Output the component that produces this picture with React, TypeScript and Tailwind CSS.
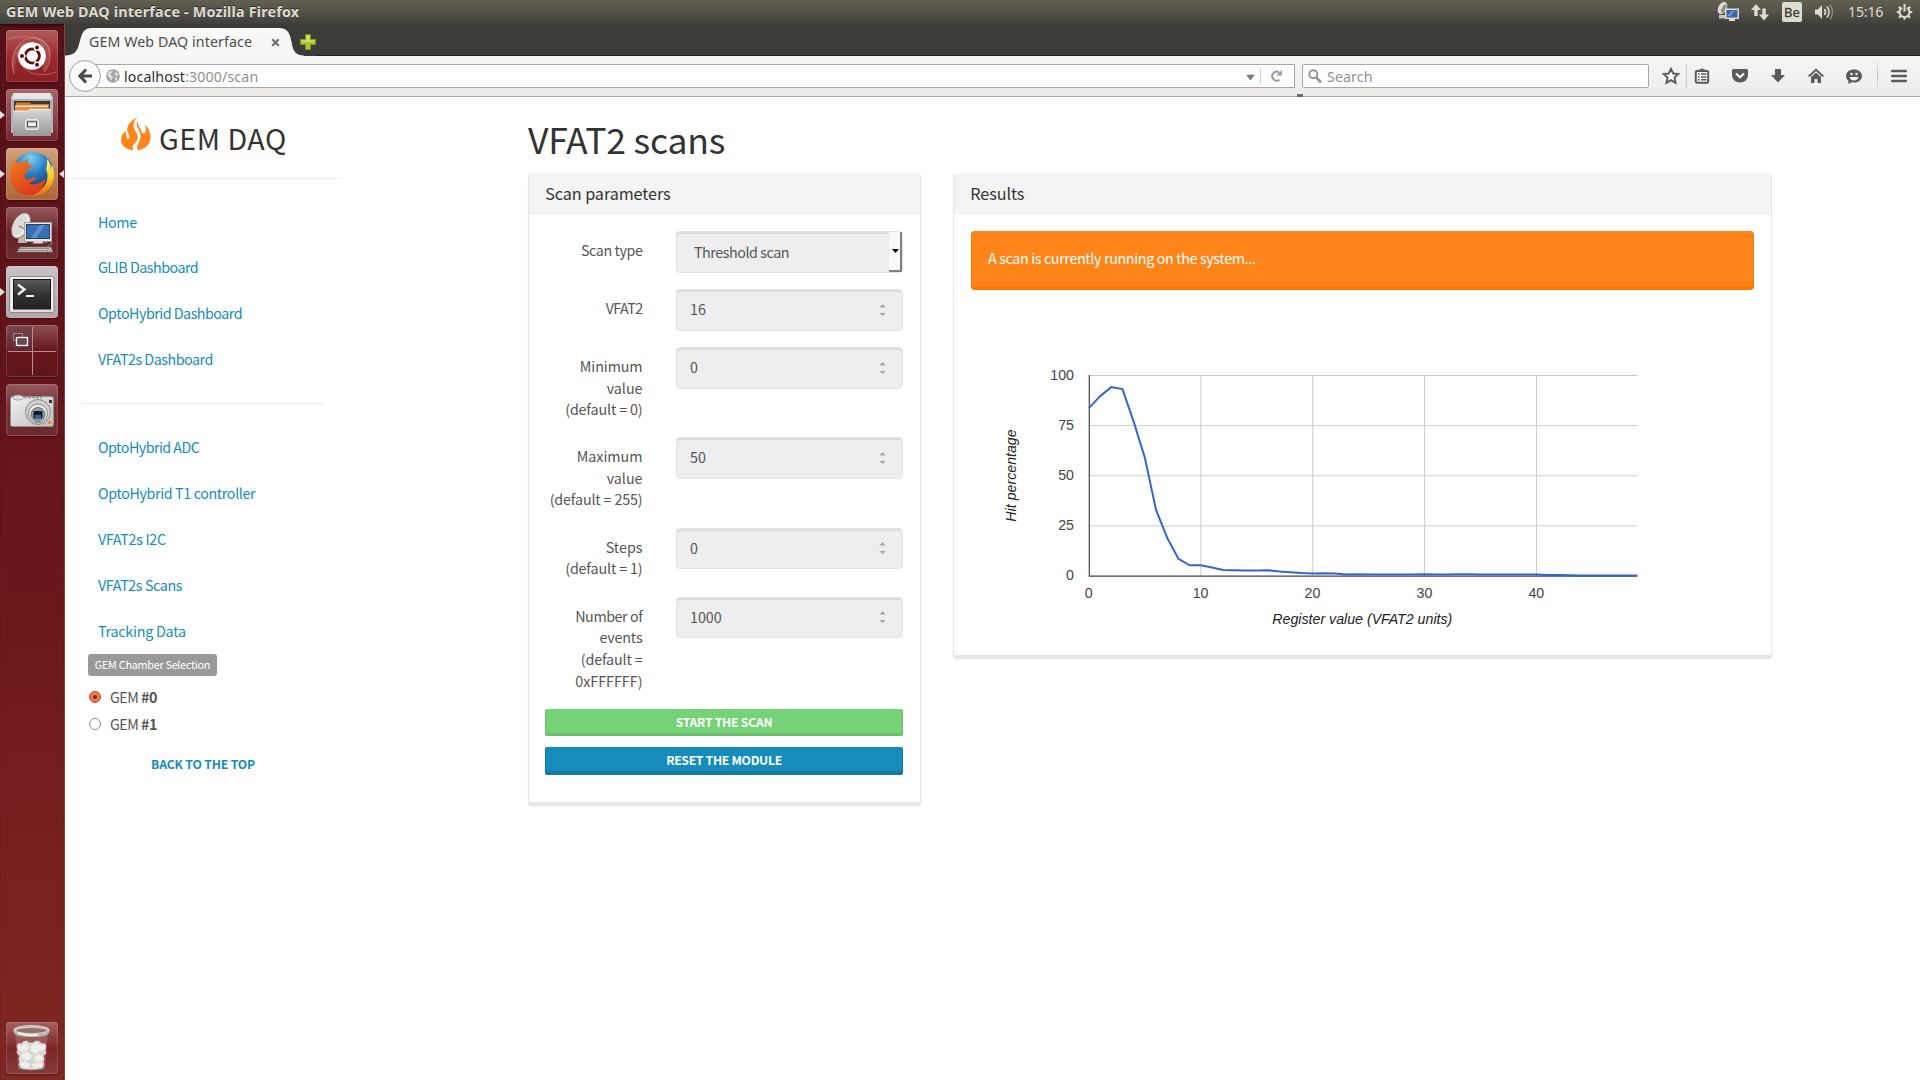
import React from "react";

const SOURCE = "font-['Noto_Sans_CJK_SC',sans-serif]";
const UI = "font-['Noto_Sans','Open_Sans',sans-serif]";

/* ---------- top system bar ---------- */

function RemoteTrayIcon() {
  return (
    <svg width="24" height="22" viewBox="0 0 24 22">
      <ellipse cx="6.5" cy="7" rx="4.2" ry="6.6" transform="rotate(28 6.5 7)" fill="#dfdbd2" />
      <ellipse cx="7.8" cy="7.6" rx="2" ry="4.6" transform="rotate(28 7.8 7.6)" fill="#8d8b84" />
      <path d="M3 14h7v3.5H3z" fill="#c9c5bc" />
      <rect x="9" y="7.5" width="14" height="10.5" fill="#dfdbd2" />
      <rect x="10.5" y="9" width="11" height="7.5" fill="#3465a4" />
      <path d="M11 15l5-5.5h3l-5 6z" fill="#6d95c9" />
      <path d="M13 18h6v2h-6z" fill="#dfdbd2" />
    </svg>
  );
}

function TopBar() {
  return (
    <header className={`flex h-6 shrink-0 items-center justify-between bg-linear-to-b from-[#615f50] via-[#54524a] to-[#403f3a] pl-[6px] pr-[7px] ${UI} text-[#dfdbd2]`}>
      <div className="text-[14.4px] font-bold leading-[22px] tracking-[0.15px] text-[#dfdbd2] [text-shadow:0_-1px_0_#2c2b27]">
        GEM Web DAQ interface - Mozilla Firefox
      </div>
      <div className="flex items-center">
        <RemoteTrayIcon />
        <svg className="ml-[11px]" width="18" height="18" viewBox="0 0 18 18" fill="#dfdbd2">
          <path d="M5 1l5 6H6.7v6H3.3V7H0z" />
          <path d="M13 17.5l-5-6h3.3V5.5h3.4v6H18z" />
        </svg>
        <div className="ml-[13px] flex h-5 w-5 items-center justify-center rounded-[2px] bg-[#dfdbd2] text-[13px] leading-5 text-[#3c3b37] [-webkit-text-stroke:0.3px]">
          Be
        </div>
        <svg className="ml-[12px]" width="21" height="18" viewBox="0 0 21 18" fill="none">
          <path d="M1 6.5h3L8 2v14l-4-4.5H1z" fill="#dfdbd2" />
          <path d="M10.5 6q2 3 0 6" stroke="#dfdbd2" strokeWidth="1.6" />
          <path d="M13 3.5q4 5.5 0 11" stroke="#dfdbd2" strokeWidth="1.6" />
          <path d="M16 1.5q5 7.5 0 15" stroke="#8a877f" strokeWidth="1.6" />
        </svg>
        <span className="ml-[13px] w-[36px] whitespace-nowrap text-[14.2px] leading-6 tracking-[-0.2px]">15:16</span>
        <svg className="ml-[12px]" width="17" height="18" viewBox="0 0 17 18" fill="none" stroke="#dfdbd2">
          <path d="M6 4.8a5 5 0 1 0 5 0" strokeWidth="2" />
          <path d="M8.5 1v7.5" strokeWidth="2" />
          <path d="M3.5 9H.8M13.5 9h2.7M5 12.7l-2 2M12 12.7l2 2M8.500 14v2.8M4.5 5.5l-1.7-1.7M12.5 5.5l1.7-1.7" strokeWidth="2" />
        </svg>
      </div>
    </header>
  );
}

/* ---------- launcher ---------- */

function UbuntuIcon() {
  return (
    <svg width="52" height="52" viewBox="0 0 52 52" fill="none">
      <g stroke="#e8b5b5" strokeOpacity=".4" strokeWidth="1">
        <path d="M2 9C20 4 44 6 44 24" />
        <path d="M8 44C2 24 14 6 30 8c16 3 18 24 8 34" />
        <path d="M50 42C28 50 10 38 12 22" />
      </g>
      <path d="M30 8c16 3 18 24 8 34C34 40 42 20 30 8Z" fill="#fff" fillOpacity=".13" />
      <path d="M8 44C2 30 8 12 20 12c-8 6-10 22-12 32Z" fill="#fff" fillOpacity=".12" />
      <circle cx="26" cy="26" r="13.8" fill="#fff" />
      <circle cx="26.3" cy="26" r="7" stroke="#5c1014" strokeWidth="3" />
      <g stroke="#fff" strokeWidth="1.4">
        <path d="M26 26L15 26M26 26L31.5 16.5M26 26L31.5 35.5" strokeWidth="1.2" />
        <circle cx="16" cy="26" r="2.7" fill="#5c1014" />
        <circle cx="31" cy="17.4" r="2.7" fill="#5c1014" />
        <circle cx="31" cy="34.8" r="2.7" fill="#5c1014" />
      </g>
      <circle cx="26.3" cy="26" r="5.4" fill="#fff" />
    </svg>
  );
}

function FilesIcon() {
  return (
    <svg width="52" height="52" viewBox="0 0 52 52">
      <defs>
        <linearGradient id="cab" x1="0" y1="0" x2="0" y2="1">
          <stop offset="0" stopColor="#d4d4d4" />
          <stop offset="1" stopColor="#999" />
        </linearGradient>
      </defs>
      <path d="M7 4h38l2 6v34H5V10z" fill="#b1b1b1" />
      <path d="M8 4h36l3 6H5z" fill="#e4e4e4" />
      <rect x="8" y="12" width="36" height="10" fill="#3a3632" />
      <path d="M10 13.5h14l1.5 1.5H43V22H9z" fill="#d9732c" />
      <path d="M9 16.5h33V18H9z" fill="#fff0dc" />
      <path d="M9 18h34v4H9z" fill="#f08b3e" />
      <path d="M7 22h15l2-1.5h21V47H7z" fill="url(#cab)" />
      <path d="M7 22h15l2-1.5h21" stroke="#efefef" fill="none" />
      <rect x="19.5" y="30.5" width="13" height="10" rx="1.5" fill="#c9c9c9" stroke="#ededed" />
      <rect x="21.5" y="32.8" width="9" height="5" fill="#eee" stroke="#4a4a4a" />
    </svg>
  );
}

function FirefoxIcon() {
  return (
    <svg width="52" height="52" viewBox="0 0 52 52">
      <defs>
        <radialGradient id="ffb" cx=".45" cy=".15" r=".85">
          <stop offset="0" stopColor="#7fd0f2" />
          <stop offset=".45" stopColor="#2a7fc0" />
          <stop offset="1" stopColor="#0d2a5e" />
        </radialGradient>
        <linearGradient id="ffo" x1="0" y1="0" x2=".5" y2="1">
          <stop offset="0" stopColor="#ef8326" />
          <stop offset=".6" stopColor="#e4571d" />
          <stop offset="1" stopColor="#e03c1c" />
        </linearGradient>
        <linearGradient id="ffy" x1="0" y1="0" x2="0" y2="1">
          <stop offset="0" stopColor="#fff6a8" />
          <stop offset=".5" stopColor="#fdc91c" />
          <stop offset="1" stopColor="#ee6a1c" />
        </linearGradient>
      </defs>
      <circle cx="27" cy="24.5" r="20.5" fill="url(#ffb)" />
      <path d="M41 11c4 4 4 9 3.5 11 1-2 1-4 1-6 3 6 3.5 14 0 21-4 7.5-11 10.5-18 10.5l-6-3c12 1 20-6 20-17 0-3-1-5-1.5-6.5 1-3 1.5-6 1-10Z" fill="url(#ffy)" />
      <path d="M9 8c-.5 3 0 5 1 6.5 3-1.500 6-1.500 8 .3 1-2 3-4 6-4.800-2 1.800-3 4-2.500 6 1.500 1 4 .5 4.500 1.500.3 1.800-2.500 3-4 4-1 1 0 3-1.500 4-2 .5-2.500 2-1.500 4 1.500 2.500 4.500 1.500 7 .3 2-1 4-.5 5 1-3 0-4 3.500-8 4.700 6 2 13-1 16.500-5C39 39 32 47.500 24 47.300 12 47 4 38 4 26c0-8 3-11 5-18Z" fill="url(#ffo)" />
    </svg>
  );
}

function RemoteIcon() {
  return (
    <svg width="52" height="52" viewBox="0 0 52 52">
      <path d="M13 28h6l2 8h-9z" fill="#bcbcb6" />
      <ellipse cx="15" cy="18.5" rx="8" ry="13.5" transform="rotate(27 15 18.5)" fill="#eceae4" stroke="#8b8b82" />
      <ellipse cx="13.5" cy="18" rx="5" ry="11" transform="rotate(27 13.5 18)" fill="#dddbd3" />
      <path d="M13 19l6 3" stroke="#63635c" />
      <rect x="18.5" y="15.5" width="27" height="19" fill="#e9e7e0" stroke="#a4a49b" />
      <rect x="20.5" y="17.5" width="23" height="14" fill="#3b6fb4" stroke="#1f3f73" />
      <path d="M25 31l9-13h5l-9 13z" fill="#7ba3d8" opacity=".6" />
      <path d="M28 34h8l1.500 2.500h-11z" fill="#dcdad2" />
      <path d="M38 36c6-3 9-1 8 1s-5 0-4 3" fill="none" stroke="#8c8c84" />
      <path d="M14 40h31l2 5H11z" fill="#d5d3cb" stroke="#6d6d65" strokeWidth=".8" />
      <path d="M14 41.5h30M13 43.3h33" stroke="#74746d" strokeWidth="1" strokeDasharray="2 .7" />
    </svg>
  );
}

function TerminalIcon() {
  return (
    <svg width="52" height="52" viewBox="0 0 52 52">
      <defs>
        <linearGradient id="trm" x1="0" y1="0" x2="0" y2="1">
          <stop offset="0" stopColor="#5a5a5a" />
          <stop offset=".5" stopColor="#333" />
          <stop offset="1" stopColor="#222" />
        </linearGradient>
      </defs>
      <rect x="3.5" y="10.5" width="44.5" height="36" rx="1.5" fill="#dedede" stroke="#8b8789" />
      <rect x="4.5" y="11" width="42.5" height="33" fill="#eee" />
      <rect x="7.5" y="13.5" width="37" height="29.5" fill="url(#trm)" stroke="#161616" />
      <path d="M12 18.5l6.500 5-6.500 5" fill="none" stroke="#f2f2f2" strokeWidth="2.4" />
      <path d="M20 30h8" stroke="#f2f2f2" strokeWidth="2" />
    </svg>
  );
}

function WorkspaceIcon() {
  return (
    <svg width="52" height="52" viewBox="0 0 52 52" fill="none">
      <rect x="2" y="2" width="24" height="24" fill="#5a3a42" fillOpacity=".45" />
      <path d="M26.5 2v48M2 26.5h48" stroke="#b98d92" />
      <rect x="7.5" y="8.5" width="9" height="7" stroke="#9b8086" />
      <rect x="10.5" y="12.5" width="11" height="8" fill="#6d4a52" stroke="#fff" strokeWidth="1.3" />
    </svg>
  );
}

function CameraIcon() {
  return (
    <svg width="52" height="52" viewBox="0 0 52 52">
      <defs>
        <linearGradient id="cam" x1="0" y1="0" x2="1" y2="1">
          <stop offset="0" stopColor="#f1f1f1" />
          <stop offset="1" stopColor="#bdbdbd" />
        </linearGradient>
      </defs>
      <rect x="4.5" y="12.5" width="43" height="30" rx="2" fill="url(#cam)" stroke="#8f8f8f" />
      <ellipse cx="12" cy="13.5" rx="5.5" ry="2.5" fill="#ddd" stroke="#8d8d8d" strokeWidth=".8" />
      <path d="M18 13.5h18" stroke="#999" strokeWidth="1.5" strokeDasharray="3 1" />
      <circle cx="32" cy="28" r="12.5" fill="#d0d0d0" stroke="#8d8d8d" />
      <circle cx="32" cy="29.5" r="9.5" fill="#ececec" stroke="#888" />
      <circle cx="32" cy="30.5" r="7" fill="#9a9da0" stroke="#6d6d6d" />
      <rect x="27.500" y="27" width="9" height="7.5" rx="1" fill="#0c1c33" />
      <rect x="29" y="31" width="6" height="3" fill="#2a62ad" />
      <rect x="43" y="16" width="3" height="3" fill="#333" />
      <rect x="42" y="37" width="3.5" height="3" fill="#e8961d" />
    </svg>
  );
}

function TrashIcon() {
  return (
    <svg width="52" height="52" viewBox="0 0 52 52">
      <path d="M9 10l3 36q13 4 27 0l3-36z" fill="#fff" fillOpacity=".16" />
      <path d="M12 45q13 4 27 0l-1 2q-13 2.500-25 0z" fill="#8b8884" />
      <path d="M10.500 24l2-3 3 .5 1.500-2 4-1 2 2h4l3-2 4 1 1.500 2 3-.5 2 3-1 4 1 3-3 3 1 3-1 3 1 3-3 3.500q-9.500 2-20 0L12.500 43l1-3-1-3 1-3-3-3.500 1-3z" fill="#d8d7d3" />
      <g fill="#efeeec">
        <path d="M12 23l4 1 3-3 4 3-1 4-5 2-4-2z" />
        <path d="M25 24l5-4 4 3 5 0-1 5-5 1-3 3-5-3z" />
        <path d="M16 32l5-2 5 3-2 5-5 0-4-2z" />
        <path d="M28 35l5-3 4 3-1 4-6 1z" />
        <path d="M14 40l5-1 5 3-2 4-7-1z" />
        <path d="M26 42l5-1 6 0-1 4-9 1z" />
      </g>
      <ellipse cx="25.5" cy="8.5" rx="16.8" ry="4" fill="#9a6f6c" stroke="#c9c8c5" strokeWidth="2.800" />
      <path d="M8 8.500v2q1 4.500 17.500 4.500T43 10.500v-2q-2 4-17.500 4T8 8.500z" fill="#b9b8b4" />
      <path d="M12 11q13 3.500 20 1.500" fill="none" stroke="#fafaf9" strokeWidth="1.500" />
    </svg>
  );
}

type Tile = { icon: React.ReactNode; bg: string; left?: boolean; right?: boolean };

const tiles: Tile[] = [
  { icon: <UbuntuIcon />, bg: "bg-linear-to-b from-[#b05a5e] via-[#9c2a2e] to-[#8a1f23]" },
  { icon: <FilesIcon />, bg: "bg-linear-to-b from-[#a5646c] to-[#77222f]", left: true },
  { icon: <FirefoxIcon />, bg: "bg-linear-to-b from-[#cfa27c] to-[#ab6534]", left: true, right: true },
  { icon: <RemoteIcon />, bg: "bg-linear-to-b from-[#935a5e] via-[#6a2026] to-[#6d2b30]" },
  { icon: <TerminalIcon />, bg: "bg-linear-to-b from-[#c9c3c5] to-[#b0a4a7]", left: true },
  { icon: <WorkspaceIcon />, bg: "bg-linear-to-b from-[#8c5054] via-[#661419] to-[#5e161b]" },
  { icon: <CameraIcon />, bg: "bg-linear-to-b from-[#935a5e] via-[#76272b] to-[#6d2b30]" },
];

function LauncherTile({ tile }: { tile: Tile }) {
  return (
    <div className="flex h-[52px] w-16 shrink-0 items-center">
      <svg className="mr-px" width="5" height="8" viewBox="0 0 5 8">
        {tile.left && <path d="M0 0l5 4-5 4z" fill="#e3dddd" />}
      </svg>
      <div className={`h-[52px] w-[52px] overflow-hidden rounded-[4px] shadow-[inset_0_0_0_1px_rgba(255,255,255,0.16),0_1px_2px_rgba(0,0,0,0.35)] ${tile.bg}`}>
        {tile.icon}
      </div>
      <svg className="ml-px" width="5" height="8" viewBox="0 0 5 8">
        {tile.right && <path d="M5 0L0 4l5 4z" fill="#e3dddd" />}
      </svg>
    </div>
  );
}

function Launcher() {
  return (
    <aside className="flex w-[65px] shrink-0 flex-col justify-between border-r border-[#86433f] bg-linear-to-b from-[#58101a] from-0% via-[#6b181b] via-55% to-[#7f2823] to-100% pt-[6px] pb-[6px] shadow-[inset_0_3px_3px_-1px_rgba(0,0,0,0.45)]">
      <div className="flex flex-col gap-[7px]">
        {tiles.map((t, i) => (
          <LauncherTile key={i} tile={t} />
        ))}
      </div>
      <LauncherTile tile={{ icon: <TrashIcon />, bg: "bg-linear-to-b from-[#a4605f] via-[#7c2626] to-[#85393a]" }} />
    </aside>
  );
}

/* ---------- browser chrome ---------- */

function TabStrip() {
  return (
    <div className={`flex h-8 shrink-0 bg-[#3c3b37] ${UI}`}>
      <div className="relative h-8 w-[235px]">
        <svg className="absolute inset-0" width="240" height="32" viewBox="0 0 240 32">
          <path d="M0 31.5H240" stroke="#24231f" />
          <path d="M0 32v-.5c9 0 12-4 14-11C17 9 18 4 27 4h187c9 0 11 5 13 16.5 1.5 7 4 11 12 11v.5z" fill="#f8f8f7" />
        </svg>
        <div className="relative flex h-9 items-center pl-[24px]">
          <span className="w-[173px] whitespace-nowrap text-[14.2px] tracking-[0.11px] text-[#4c4c4c]">GEM Web DAQ interface</span>
          <svg className="ml-[9px]" width="9" height="9" viewBox="0 0 9 9">
            <path d="M1.200 1.200l6.600 6.600M7.800 1.200L1.200 7.800" stroke="#6a6a68" strokeWidth="2" />
          </svg>
        </div>
      </div>
      <svg className="mt-[10px]" width="16" height="16" viewBox="0 0 16 16">
        <path d="M5.5.5h5v5h5v5h-5v5h-5v-5h-5v-5h5z" fill="#a6c62e" stroke="#7a9a22" />
        <path d="M6.5 1.5h3v5h5V8h-13V6.500h5z" fill="#cfe27a" />
      </svg>
      <div className="flex-1 border-b border-[#24231f]" />
    </div>
  );
}

function GlobeIcon() {
  return (
    <svg width="14" height="14" viewBox="0 0 14 14">
      <circle cx="7" cy="7" r="6.8" fill="#a2a2a2" />
      <path d="M2 4c2-2 4-2.500 5-2l-1 2-2 1 1 1.500 2 1-1 3-1 1-1.500-3L1.500 7zM9 2l3 2.500.5 2-2 .5-2-1.500 1-1.500zM9 8l2.500.5-1 3-1.500.5z" fill="#e2e2e2" />
    </svg>
  );
}

const G = "#5b5b5a";

function NavBar() {
  return (
    <div className={`flex h-[41px] shrink-0 items-center border-b border-[#aba7a1] bg-linear-to-b from-[#f6f5f4] to-[#efedec] ${UI}`}>
      <div className="z-10 ml-[4px] flex h-8 w-8 shrink-0 items-center justify-center rounded-full border border-[#98a1ac] bg-[#fafafa]">
        <svg width="14" height="16" viewBox="0 0 14 16" fill="none" stroke="#4d4d4c">
          <path d="M8 1.5L2 8l6 6.500M2.500 8H14" strokeWidth="3.2" />
        </svg>
      </div>
      <div className="-ml-[7px] flex h-6 w-[1201px] shrink-0 items-center border border-[#aba7a1] bg-white pl-[11px]">
        <GlobeIcon />
        <span className="ml-[4px] whitespace-nowrap pt-px text-[14.2px] leading-5 tracking-[0.13px] text-[#2c2c2c]">
          localhost<span className="text-[#8f8f8f]">:3000/scan</span>
        </span>
        <div className="ml-auto flex items-center">
          <svg className="mt-[2px]" width="9" height="7" viewBox="0 0 9 7">
            <path d="M.8 1h7.400L4.500 6z" fill="#7d7d7d" stroke="#6b6b6b" strokeWidth=".6" />
          </svg>
          <div className="ml-[5px] h-4 w-px bg-[#c9ced4]" />
          <svg className="mr-[11px] ml-[9px]" width="13" height="14" viewBox="0 0 13 14">
            <path d="M9.500 10.800A4.500 4.500 0 1 1 9 3.300" fill="none" stroke="#8d9bab" strokeWidth="2" />
            <path d="M11.800 1v5.500H6.300z" fill="#8d9bab" />
          </svg>
        </div>
      </div>
      <div className="ml-[7px] flex h-6 w-[347px] shrink-0 items-center rounded-[2px] border border-[#aba7a1] bg-white pl-[5px]">
        <svg width="14" height="15" viewBox="0 0 14 15" fill="none" stroke="#969696">
          <circle cx="5.3" cy="5.3" r="4" strokeWidth="1.9" />
          <path d="M8.300 8.500l4.700 5" strokeWidth="2.6" />
        </svg>
        <span className="ml-[5px] pt-px text-[14.2px] leading-5 tracking-[0.1px] text-[#919191]">Search</span>
      </div>
      <div className="flex flex-1 items-center">
        <svg className="ml-[13px]" width="18" height="18" viewBox="0 0 18 18">
          <path d="M9 1.800l2.200 4.700 5 .6-3.700 3.500 1 5.200L9 13.200l-4.500 2.600 1-5.200L1.800 7.100l5-.6z" fill="#fafafa" stroke={G} strokeWidth="1.9" />
        </svg>
        <div className="ml-[6px] h-6 w-px bg-[#c5c9cd]" />
        <svg className="ml-[7px]" width="16" height="18" viewBox="0 0 16 18">
          <path d="M4.500 4V2.500h2Q8-.5 9.500 2.500h2V4z" fill={G} />
          <rect x="1.8" y="4" width="12.400" height="11.800" rx="1" fill="#fafafa" stroke={G} strokeWidth="2" />
          <path d="M4 7h1.500M7 7h5.500M4 9.900h1.500M7 9.900h5.500M4 12.800h1.500M7 12.800h5.500" stroke={G} strokeWidth="1.500" />
        </svg>
        <svg className="ml-[22px]" width="16" height="16" viewBox="0 0 16 16">
          <path d="M1.500 1h13q1.500 0 1.500 1.500V7c0 4.500-3.500 7.500-8 7.500S0 11.500 0 7V2.500Q0 1 1.500 1z" fill={G} />
          <path d="M4 5.500l4 3.800 4-3.800" fill="none" stroke="#f4f4f4" strokeWidth="2.2" />
        </svg>
        <svg className="ml-[23px]" width="14" height="16" viewBox="0 0 14 16">
          <path d="M4 1h6v6h4l-7 7.500L0 7h4z" fill={G} />
        </svg>
        <svg className="ml-[23px]" width="16" height="16" viewBox="0 0 16 16">
          <path d="M.7 8.500L8 1.700l7.300 6.800" fill="none" stroke={G} strokeWidth="1.9" />
          <path d="M3 9l5-4.600L13 9v6H9.500v-4h-3v4H3z" fill={G} />
        </svg>
        <svg className="ml-[22px]" width="16" height="17" viewBox="0 0 16 17">
          <path d="M8 1.500c4.500 0 8 2.700 8 6.500s-3.500 6.500-8 6.500q-1.500 0-2.500-.3Q4 16 1.500 15.500 3 14.500 2.500 13 0 11 0 8c0-3.800 3.500-6.500 8-6.500z" fill={G} />
          <path d="M3.500 9h9q-1 3.500-4.500 3.500T3.500 9z" fill="#f4f4f4" />
          <circle cx="5.5" cy="6" r="1.2" fill="#f4f4f4" />
          <circle cx="10.5" cy="6" r="1.2" fill="#f4f4f4" />
        </svg>
        <div className="ml-[15px] h-9 w-px bg-linear-to-b from-transparent via-[#bdbab6] to-transparent" />
        <svg className="ml-[13px]" width="16" height="14" viewBox="0 0 16 14">
          <path d="M1.200 2h13.600M1.200 7h13.600M1.200 12h13.600" stroke={G} strokeWidth="2.6" strokeLinecap="round" />
        </svg>
      </div>
    </div>
  );
}

/* ---------- page ---------- */

type NavItem = { label: string; fit: string };

const mainLinks: NavItem[] = [
  { label: "Home", fit: "h-[45px] tracking-[-0.35px]" },
  { label: "GLIB Dashboard", fit: "h-[46px] tracking-[-0.5px]" },
  { label: "OptoHybrid Dashboard", fit: "h-[46px] tracking-[-0.5px]" },
  { label: "VFAT2s Dashboard", fit: "h-[46px] tracking-[-0.48px]" },
];

const toolLinks: NavItem[] = [
  { label: "OptoHybrid ADC", fit: "h-[46px] tracking-[-0.54px]" },
  { label: "OptoHybrid T1 controller", fit: "h-[46px] tracking-[-0.38px]" },
  { label: "VFAT2s I2C", fit: "h-[46px] tracking-[-0.32px]" },
  { label: "VFAT2s Scans", fit: "h-[46px] tracking-[-0.4px]" },
  { label: "Tracking Data", fit: "h-[46px] tracking-[-0.24px]" },
];

function NavLinks({ items }: { items: NavItem[] }) {
  return (
    <ul className="flex flex-col pl-[33px]">
      {items.map((item) => (
        <li key={item.label} className={`text-[14.3px] leading-[46px] text-[#158cba] ${item.fit}`}>
          {item.label}
        </li>
      ))}
    </ul>
  );
}

function Radio({ label, checked }: { label: string; checked?: boolean }) {
  return (
    <div className="flex h-[27px] items-center pl-[24px] text-[14.3px] leading-[27px] tracking-[-0.5px] text-[#555]">
      {checked ? (
        <span className="flex h-3 w-3 items-center justify-center rounded-full border border-[#b5532f] bg-[#f0784a]">
          <span className="h-1 w-1 rounded-full bg-[#6b2f1c]" />
        </span>
      ) : (
        <span className="h-3 w-3 rounded-full border border-[#8e8e8a] bg-white" />
      )}
      <span className="ml-[9px] whitespace-pre">
        GEM <b>{label}</b>
      </span>
    </div>
  );
}

function Sidebar() {
  return (
    <nav className="w-[276px] shrink-0">
      <div className="flex h-[82px] items-start border-b border-[#eee] pl-[56px] pt-[20px]">
        <svg width="30" height="34" viewBox="0 0 30 34" fill="#ff851b">
          <path d="M16.500 0C10 4 5.500 8 6.200 13.500c.3 2.700 2.600 4.500 2.300 7-.5 1.500-2.500 1.500-3 0-.3-2 .2-3.700-.8-6.200C1.500 16.500 0 19.500 0 23c0 5.500 5 9.800 12.800 10.300-1.500-1.500-1.800-3.300-.5-5.300 2.300-2.800 5-4.700 4.500-8.700-.6-4-4.100-6-4.300-10.300C12.400 5 14 3 16.500 0z" />
          <path d="M16.500 3.500C14.800 7 15.800 10 17.800 13c2.200 3.500 2.500 7.500.5 11.500-1.500 3-2.800 5.500-1.800 8.800C24.500 32 29.300 27.500 29.500 20.500c.2-5-2-9.500-5.500-13 1 3.500 1.200 7.300-.2 8.600-1.500 1-3 0-3.500-2C19.700 11 16.700 9 16.500 3.500z" />
        </svg>
        <span className="ml-[8px] text-[28.7px] leading-[42px] tracking-[0.5px] text-[#333]">GEM DAQ</span>
      </div>
      <div className="pt-[20px]">
        <NavLinks items={mainLinks} />
      </div>
      <div className="mx-4 mt-[21px] border-t border-[#eee]" />
      <div className="pt-[20px]">
        <NavLinks items={toolLinks} />
      </div>
      <div className="ml-[23px] flex h-[22px] w-[129px] items-center justify-center rounded-[3px] bg-[#999] text-[10.8px] leading-[21px] tracking-[-0.26px] text-white">
        <span className="-mt-px">GEM Chamber Selection</span>
      </div>
      <div className="pt-[7px]">
        <Radio label="#0" checked />
        <Radio label="#1" />
      </div>
      <div className="mt-[16px] text-center text-[12.2px] font-bold leading-[22px] tracking-[-0.16px] text-[#158cba]">BACK TO THE TOP</div>
    </nav>
  );
}

function Panel({ title, className, children }: { title: string; className: string; children: React.ReactNode }) {
  return (
    <section className={`flex flex-col rounded-[4px] border border-t-0 border-b-4 border-[#e7e7e7] bg-white shadow-[0_1px_2px_rgba(0,0,0,0.05)] ${className}`}>
      <h3 className="h-[42px] rounded-t-[3px] bg-[#f4f4f4] pl-[16.3px] text-[16.2px] leading-[41px] tracking-[-0.09px] text-[#333]">{title}</h3>
      {children}
    </section>
  );
}

type Line = [text: string, tracking: string];

function Row({ label, height, children }: { label: Line[]; height: string; children: React.ReactNode }) {
  return (
    <div className={`flex justify-between ${height}`}>
      <div className="w-[97.5px] pt-[8px] text-right text-[14.3px] leading-[21.7px] whitespace-nowrap text-[#555]">
        {label.map(([text, tracking]) => (
          <div key={text} className={tracking}>
            {text}
          </div>
        ))}
      </div>
      {children}
    </div>
  );
}

const FIELD =
  "flex h-[41.5px] w-[227px] rounded-[4px] border border-[#e3e3e3] bg-[#eee] text-[14.3px] text-[#555] shadow-[inset_0_2px_0_#dcdcdc]";

function NumberField({ value }: { value: string }) {
  return (
    <div className={`${FIELD} items-center justify-between pl-[13px] pr-[16px] leading-[37px]`}>
      <span className="-mt-[2px]">{value}</span>
      <svg width="7" height="14" viewBox="0 0 7 14" fill="#a5a5a5">
        <path d="M3.500 1l3 3.500h-6zM3.500 13l3-3h-6z" />
      </svg>
    </div>
  );
}

function SelectField({ value }: { value: string }) {
  return (
    <div className={`${FIELD} justify-between pl-[17px] leading-[39px]`}>
      <span className="tracking-[-0.45px]">{value}</span>
      <span className="flex w-[13px] items-center justify-center border-r-2 border-b-2 border-[#808080] bg-[#f8f8f6]">
        <svg className="ml-px" width="7" height="4" viewBox="0 0 7 4">
          <path d="M0 0h7L3.500 4z" fill="#000" />
        </svg>
      </span>
    </div>
  );
}

const points = [
  83.7, 89.7, 94.2, 93.2, 77, 59, 33, 19, 8.6, 5.3, 5.4, 4.2, 3, 2.9, 2.8, 2.8, 2.9, 2.3, 1.9, 1.5, 1.3, 1.4, 1.2, 0.8, 0.9,
  0.8, 0.8, 0.8, 0.8, 0.8, 0.9, 0.8, 0.8, 0.9, 0.9, 0.8, 0.8, 0.7, 0.8, 0.7, 0.8, 0.5, 0.5, 0.4, 0.2, 0.3, 0.2, 0.2, 0.2, 0.2,
];

function Chart() {
  const X = (v: number) => 117.9 + v * 11.19;
  const Y = (v: number) => 246 - v * 2.005;
  const line = points.map((v, i) => `${X(i).toFixed(2)},${Y(v).toFixed(2)}`).join(" ");
  return (
    <svg className="font-['Liberation_Sans',Arial,sans-serif]" width="783" height="320" viewBox="0 0 783 320" fontSize="14.2">
      {[100, 75, 50, 25].map((v) => (
        <line key={v} x1="118" x2="666.3" y1={Y(v)} y2={Y(v)} stroke="#ccc" />
      ))}
      {[10, 20, 30, 40].map((v) => (
        <line key={v} x1={X(v)} x2={X(v)} y1="45" y2="246" stroke="#ccc" />
      ))}
      <path d="M118.3 45v201.500M117.700 246.200h548.600" stroke="#444" strokeWidth="1.200" fill="none" />
      <polyline points={line} fill="none" stroke="#3366cc" strokeWidth="2" />
      {[100, 75, 50, 25, 0].map((v) => (
        <text key={v} x="103" y={Math.round(250.2 - v * 2.005)} textAnchor="end" fill="#444">
          {v}
        </text>
      ))}
      {[0, 10, 20, 30, 40].map((v) => (
        <text key={v} x={X(v) - 0.2} y="267.5" textAnchor="middle" fill="#444">
          {v}
        </text>
      ))}
      <text x="391.3" y="293.5" textAnchor="middle" fontStyle="italic" fill="#222">
        Register value (VFAT2 units)
      </text>
      <text transform="translate(45 145.5) rotate(-90)" textAnchor="middle" fontStyle="italic" fill="#222">
        Hit percentage
      </text>
    </svg>
  );
}

const NONE = "tracking-normal";
const SLIGHT = "tracking-[-0.15px]";
const TIGHT = "tracking-[-0.42px]";

function Page() {
  return (
    <main className={`flex flex-1 bg-white ${SOURCE}`}>
      <Sidebar />
      <div className="ml-[187px] pt-[12px]">
        <h1 className="h-16 text-[35.6px] leading-[60px] tracking-[-0.25px] text-[#333]">VFAT2 scans</h1>
        <div className="flex items-start gap-8">
          <Panel title="Scan parameters" className="h-[633px] w-[393px]">
            <div className="flex flex-col pt-[16px] pr-[17px] pl-4">
              <Row label={[["Scan type", TIGHT]]} height="h-[58px]">
                <SelectField value="Threshold scan" />
              </Row>
              <Row label={[["VFAT2", "tracking-[-0.6px]"]]} height="h-[58px]">
                <NumberField value="16" />
              </Row>
              <Row label={[["Minimum", "tracking-[-0.1px]"], ["value", NONE], ["(default = 0)", SLIGHT]]} height="h-[90px]">
                <NumberField value="0" />
              </Row>
              <Row label={[["Maximum", NONE], ["value", NONE], ["(default = 255)", "tracking-[-0.15px]"]]} height="h-[90.5px]">
                <NumberField value="50" />
              </Row>
              <Row label={[["Steps", NONE], ["(default = 1)", SLIGHT]]} height="h-[69px]">
                <NumberField value="0" />
              </Row>
              <Row label={[["Number of", TIGHT], ["events", SLIGHT], ["(default =", SLIGHT], ["0xFFFFFF)", NONE]]} height="h-[112.5px]">
                <NumberField value="1000" />
              </Row>
              <button className="h-[27px] rounded-[2px] border border-t-0 border-b-[3px] border-[#6cc06c] bg-[#75d277] text-[12.2px] font-bold leading-[24px] tracking-[-0.26px] text-white">
                <span className="relative top-[0.5px]">START THE SCAN</span>
              </button>
              <button className="mt-[11px] h-[28px] rounded-[2px] border border-t-0 border-b-4 border-[#127ba3] bg-[#158cba] text-[12.2px] font-bold leading-[24px] tracking-[-0.3px] text-white">
                <span className="relative top-[0.5px]">RESET THE MODULE</span>
              </button>
            </div>
          </Panel>
          <Panel title="Results" className="h-[486px] w-[819px]">
            <div className="flex flex-col px-[17px] pt-[16px]">
              <div className="h-[59px] rounded-[4px] border border-t-0 border-b-4 border-[#ff7701] bg-[#ff851b] pl-4 text-[14.3px] leading-[54px] tracking-[-0.36px] text-white">
                A scan is currently running on the system...
              </div>
              <div className="mt-[40px]">
                <Chart />
              </div>
            </div>
          </Panel>
        </div>
      </div>
    </main>
  );
}

export default function App() {
  return (
    <div className="flex h-[1080px] w-[1920px] flex-col overflow-hidden bg-white">
      <TopBar />
      <div className="flex min-h-0 flex-1">
        <Launcher />
        <div className="relative flex min-w-0 flex-1 flex-col">
          <TabStrip />
          <NavBar />
          <div className="absolute top-[70px] left-[1232px] h-[3px] w-[6px] bg-[#6b6b6b]" />
          <Page />
        </div>
      </div>
    </div>
  );
}
